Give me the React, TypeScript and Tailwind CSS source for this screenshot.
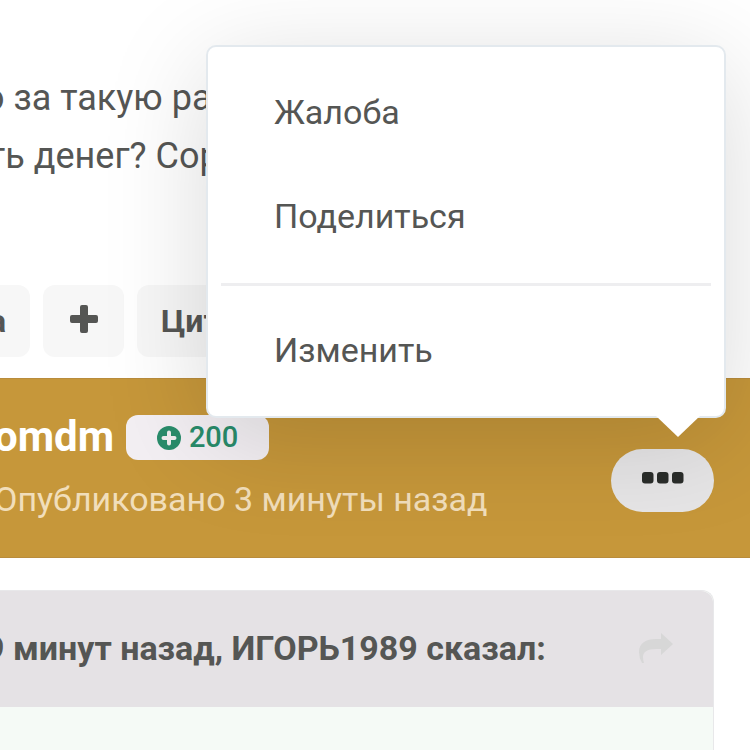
import { ReactNode } from "react";

const menuItem =
  "block w-full px-[66px] text-left text-[34px] leading-[104px] text-[#555654]";

function ToolButton({
  label,
  className,
  children,
}: {
  label: string;
  className: string;
  children: ReactNode;
}) {
  return (
    <button
      type="button"
      aria-label={label}
      className={`flex h-[72px] shrink-0 items-center rounded-xl bg-[#f7f7f7] text-[32px] font-bold ${className}`}
    >
      {children}
    </button>
  );
}

function PostMenu() {
  return (
    <div className="absolute right-6 bottom-[139px] left-[206px] rounded-[10px] border-2 border-[#e3e9ee] bg-white pt-[13px] pb-[14px] shadow-[0_20px_105px_rgba(0,0,0,0.15)]">
      <a href="#report" className={menuItem}>
        Жалоба
      </a>
      <a href="#share" className={menuItem}>
        Поделиться
      </a>
      <hr className="mx-[13px] mt-[15px] mb-3 border-t-3 border-[#eeeef0]" />
      <a href="#edit" className={menuItem}>
        Изменить
      </a>
      <svg
        viewBox="0 0 44 22"
        className="absolute top-full right-6 h-[22px] w-11"
        aria-hidden="true"
      >
        <path d="M0 0H44L22 21Z" fill="#fff" />
      </svg>
    </div>
  );
}

export default function App() {
  return (
    <main className="flex min-h-screen flex-col overflow-hidden bg-white font-['Roboto',sans-serif] whitespace-nowrap text-[#555654]">
      <section>
        <div className="pt-[69px] text-[36px] leading-[58px]">
          <p className="-ml-4">о за такую ра</p>
          <p className="-ml-3">ть денег? Сор</p>
        </div>
        <div className="mt-[100px] mb-[21px] -ml-4 flex gap-[13px]">
          <ToolButton label="Мультицитата" className="w-[46px] justify-end pr-6">
            а
          </ToolButton>
          <ToolButton label="Добавить" className="w-[81px] justify-center">
            <svg viewBox="0 0 28 28" className="mb-1 h-7 w-7" fill="currentColor">
              <path d="M12 0h4a2 2 0 0 1 2 2v8h8a2 2 0 0 1 2 2v4a2 2 0 0 1-2 2h-8v8a2 2 0 0 1-2 2h-4a2 2 0 0 1-2-2v-8H2a2 2 0 0 1-2-2v-4a2 2 0 0 1 2-2h8V2a2 2 0 0 1 2-2Z" />
            </svg>
          </ToolButton>
          <ToolButton label="Цитата" className="px-6">
            Цит
          </ToolButton>
        </div>
      </section>

      <header className="relative flex h-[180px] items-center justify-between border-y border-[#b98c3c] bg-[#c6973a] pr-9">
        <div className="-ml-1.5">
          <div className="flex items-center gap-3">
            <h2 className="text-[42px] leading-[52px] font-bold text-white">omdm</h2>
            <span className="flex h-[45px] w-[143px] items-center justify-center gap-2 rounded-xl bg-[#f3eff3] pt-0.5 text-[29px] font-medium text-[#298c6b]">
              <svg viewBox="0 0 24 24" className="h-6 w-6" aria-hidden="true">
                <circle cx="12" cy="12" r="12" fill="currentColor" />
                <path
                  d="M12 6.5v11M6.5 12h11"
                  stroke="#f0edef"
                  strokeWidth="4"
                  strokeLinecap="round"
                />
              </svg>
              200
            </span>
          </div>
          <p className="mt-[10px] text-[34px] leading-[52px] text-[#f1debb]">
            Опубликовано 3 минуты назад
          </p>
        </div>
        <button
          type="button"
          aria-label="Ещё"
          className="mt-6 flex h-[63px] w-[103px] items-center justify-center rounded-full bg-[#e6e5e6] pb-1"
        >
          <svg viewBox="0 0 42 12" className="h-3 w-[42px]" fill="#2a2d2a">
            <rect width="11.5" height="11.5" rx="3" />
            <rect x="15" width="11.5" height="11.5" rx="3" />
            <rect x="30" width="11.5" height="11.5" rx="3" />
          </svg>
        </button>
        <PostMenu />
      </header>

      <blockquote className="mt-8 mr-9 -ml-4 flex grow flex-col rounded-t-xl border border-b-0 border-[#e8e8ea] bg-[#f5faf6]">
        <div className="flex h-[116px] items-center justify-between rounded-t-xl bg-[#e5e2e5] pr-10 pb-0.5 text-[34px] font-bold">
          <span>9 минут назад, ИГОРЬ1989 сказал:</span>
          <a href="#source" aria-label="Перейти к сообщению" className="text-[#d7d7d7]">
            <svg viewBox="0 0 34 30" className="h-[30px] w-[34px]" fill="currentColor">
              <path d="M22 0 34 11 22 22V16H17C8 16 4 19 4 24Q4 27 5 30H3Q0 25 0 19C0 10 7 6 17 6H22Z" />
            </svg>
          </a>
        </div>
      </blockquote>
    </main>
  );
}
